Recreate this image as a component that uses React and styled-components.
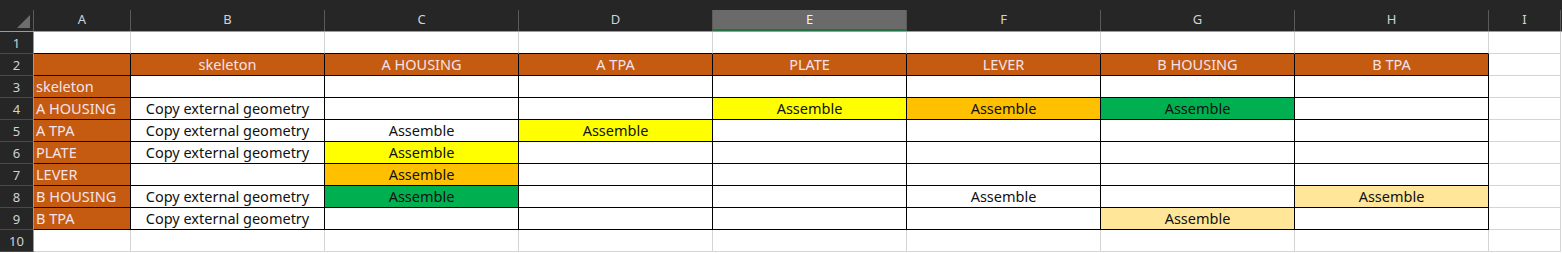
import React from "react";
import styled, { createGlobalStyle } from "styled-components";

const GlobalStyle = createGlobalStyle`
  html, body {
    margin: 0;
    padding: 0;
    background: #ffffff;
    overflow: hidden;
  }
  * { box-sizing: border-box; }
`;

const FONT = `"Noto Sans", "Noto Sans CJK KR", sans-serif`;

const ORANGE = "#c55a11";

const fills = {
  orange: ORANGE,
  yellow: "#ffff00",
  gold: "#ffc000",
  green: "#00b050",
  pale: "#ffe699",
};

const widths = [97, 194, 194, 194, 194, 194, 194, 194, 72];
const letters = ["A", "B", "C", "D", "E", "F", "G", "H", "I"];

const Sheet = styled.div`
  width: 1562px;
  height: 253px;
  background: #ffffff;
  font-family: ${FONT};
  font-size: 14.5px;
  overflow: hidden;
`;

const HeaderBar = styled.div`
  display: flex;
  height: 32px;
  background: #262626;
  border-bottom: 1px solid #9b9b9b;
`;

const Corner = styled.div`
  position: relative;
  width: 34px;
  flex: none;
  border-right: 1px solid #5a5a5a;
  margin-top: 10px;
`;

const CornerTriangle = styled.div`
  position: absolute;
  right: 3px;
  bottom: 3px;
  width: 0;
  height: 0;
  border-left: 13px solid transparent;
  border-bottom: 13px solid #6d6d6d;
`;

const ColHead = styled.div`
  flex: none;
  width: ${(p) => p.$w}px;
  margin-top: 10px;
  display: flex;
  align-items: center;
  justify-content: center;
  color: ${(p) => (p.$selected ? "#f2f2f2" : "#cfd3d8")};
  background: ${(p) => (p.$selected ? "#6a6a6a" : "transparent")};
  border-right: 1px solid #5a5a5a;
  border-bottom: ${(p) => (p.$selected ? "2px solid #217346" : "none")};
  font-size: 13px;
  padding-bottom: ${(p) => (p.$selected ? "1px" : "3px")};
`;

const Row = styled.div`
  display: flex;
  height: 22px;
`;

const RowHead = styled.div`
  flex: none;
  width: 34px;
  height: 22px;
  background: #262626;
  color: #cfd3d8;
  font-size: 13px;
  border-right: 1px solid #9b9b9b;
  border-bottom: 1px solid #4a4a4a;
  display: flex;
  align-items: center;
  justify-content: center;
`;

const Cell = styled.div`
  flex: none;
  width: ${(p) => p.$w}px;
  height: 22px;
  display: flex;
  align-items: center;
  justify-content: ${(p) => (p.$left ? "flex-start" : "center")};
  padding-left: ${(p) => (p.$left ? "2px" : "0")};
  padding-bottom: 2px;
  white-space: nowrap;
  overflow: hidden;
  background: ${(p) => (p.$fill ? fills[p.$fill] : "#ffffff")};
  color: ${(p) => (p.$fill === "orange" ? "#f3e4ec" : "#111111")};
  border-right: 1px solid ${(p) => (p.$boxRight ? "#000000" : "#d4d4d4")};
  border-bottom: 1px solid ${(p) => (p.$boxBottom ? "#000000" : "#d4d4d4")};
`;

const names = ["skeleton", "A HOUSING", "A TPA", "PLATE", "LEVER", "B HOUSING", "B TPA"];

// body rows 3..9 : [B, C, D, E, F, G, H] as [text, fill]
const body = [
  [null, null, null, null, null, null, null],
  ["Copy external geometry", null, null, ["Assemble", "yellow"], ["Assemble", "gold"], ["Assemble", "green"], null],
  ["Copy external geometry", ["Assemble"], ["Assemble", "yellow"], null, null, null, null],
  ["Copy external geometry", ["Assemble", "yellow"], null, null, null, null, null],
  [null, ["Assemble", "gold"], null, null, null, null, null],
  ["Copy external geometry", ["Assemble", "green"], null, null, ["Assemble"], null, ["Assemble", "pale"]],
  ["Copy external geometry", null, null, null, null, ["Assemble", "pale"], null],
];

const inBox = (row, col) => row >= 2 && row <= 9 && col <= 7;

const App = () => {
  const rows = [];
  for (let r = 1; r <= 10; r++) {
    const cells = widths.map((w, c) => {
      let text = null;
      let fill = null;
      let left = false;
      if (r === 2 && c <= 7) {
        fill = "orange";
        text = c === 0 ? null : names[c - 1];
      } else if (r >= 3 && r <= 9 && c === 0) {
        fill = "orange";
        text = names[r - 3];
        left = true;
      } else if (r >= 3 && r <= 9 && c >= 1 && c <= 7) {
        const v = body[r - 3][c - 1];
        if (typeof v === "string") text = v;
        else if (v) {
          text = v[0];
          fill = v[1] || null;
        }
      }
      const boxRight = inBox(r, c);
      const boxBottom = inBox(r, c) || (r === 1 && c <= 7);
      return (
        <Cell key={c} $w={w} $fill={fill} $left={left} $boxRight={boxRight} $boxBottom={boxBottom}>
          {text}
        </Cell>
      );
    });
    rows.push(
      <Row key={r}>
        <RowHead>{r}</RowHead>
        {cells}
      </Row>
    );
  }

  return (
    <>
      <GlobalStyle />
      <Sheet>
        <HeaderBar>
          <Corner>
            <CornerTriangle />
          </Corner>
          {letters.map((l, i) => (
            <ColHead key={l} $w={widths[i]} $selected={l === "E"}>
              {l}
            </ColHead>
          ))}
        </HeaderBar>
        {rows}
      </Sheet>
    </>
  );
};

export default App;
